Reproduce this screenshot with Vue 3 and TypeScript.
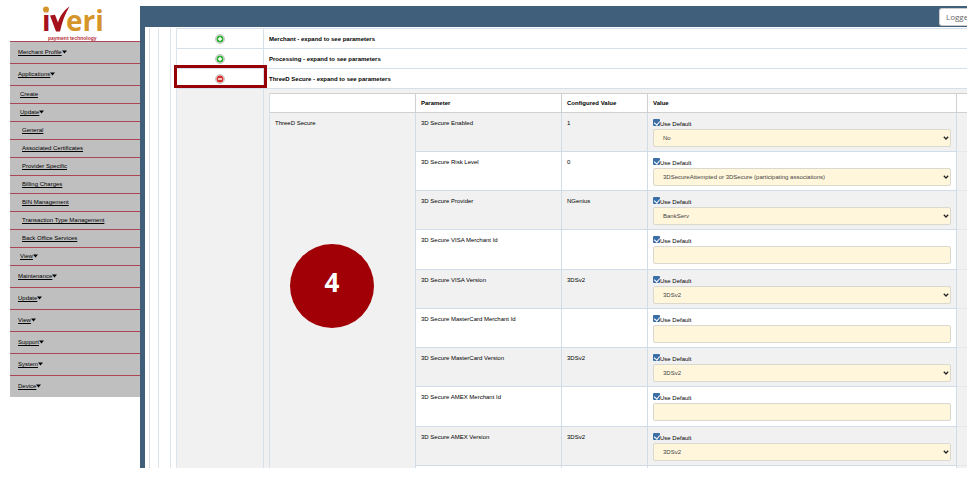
<script setup lang="ts">
interface MenuItem {
  label: string
  level: 0 | 1 | 2
  arrow?: boolean
}

interface Parameter {
  id: string
  name: string
  configured: string
  options?: string[]
}

const menu: MenuItem[] = [
  { label: 'Merchant Profile', level: 0, arrow: true },
  { label: 'Applications', level: 0, arrow: true },
  { label: 'Create', level: 1 },
  { label: 'Update', level: 1, arrow: true },
  { label: 'General', level: 2 },
  { label: 'Associated Certificates', level: 2 },
  { label: 'Provider Specific', level: 2 },
  { label: 'Billing Charges', level: 2 },
  { label: 'BIN Management', level: 2 },
  { label: 'Transaction Type Management', level: 2 },
  { label: 'Back Office Services', level: 2 },
  { label: 'View', level: 1, arrow: true },
  { label: 'Maintenance', level: 0, arrow: true },
  { label: 'Update', level: 0, arrow: true },
  { label: 'View', level: 0, arrow: true },
  { label: 'Support', level: 0, arrow: true },
  { label: 'System', level: 0, arrow: true },
  { label: 'Device', level: 0, arrow: true },
]

const groups = [
  { name: 'Merchant', open: false },
  { name: 'Processing', open: false },
  { name: 'ThreeD Secure', open: true },
]

const parameters: Parameter[] = [
  { id: 'enabled', name: '3D Secure Enabled', configured: '1', options: ['No'] },
  { id: 'risk', name: '3D Secure Risk Level', configured: '0', options: ['3DSecureAttempted or 3DSecure (participating associations)'] },
  { id: 'provider', name: '3D Secure Provider', configured: 'NGenius', options: ['BankServ'] },
  { id: 'visa-id', name: '3D Secure VISA Merchant Id', configured: '' },
  { id: 'visa-version', name: '3D Secure VISA Version', configured: '3DSv2', options: ['3DSv2'] },
  { id: 'mc-id', name: '3D Secure MasterCard Merchant Id', configured: '' },
  { id: 'mc-version', name: '3D Secure MasterCard Version', configured: '3DSv2', options: ['3DSv2'] },
  { id: 'amex-id', name: '3D Secure AMEX Merchant Id', configured: '' },
  { id: 'amex-version', name: '3D Secure AMEX Version', configured: '3DSv2', options: ['3DSv2'] },
]
</script>

<template>
  <div class="page">
    <aside class="sidebar">
      <svg class="logo" viewBox="0 0 130 35" role="img" aria-label="iveri payment technology">
        <text x="32" y="25" class="mark red">i</text>
        <circle cx="36" cy="3.5" r="3.6" fill="#fff" />
        <circle cx="36" cy="3.5" r="3" fill="#d6952a" />
        <path d="M40 9.500 L45 8.800 L48 16.500 C50 10 54 4 59.500 .5 C55 8 52 16 50 25.500 L46 25.500 Z" fill="#a5121c" />
        <text x="56" y="25" class="mark gold">eri</text>
        <text x="38" y="34" class="tagline">payment technology</text>
      </svg>
      <nav class="menu">
        <div v-for="(item, i) in menu" :key="i" class="item" :class="'level-' + item.level">
          <a href="#">{{ item.label }}</a>
          <svg v-if="item.arrow" class="caret" viewBox="0 0 6 4"><path d="M0 .2H6L3 3.800Z" /></svg>
        </div>
      </nav>
    </aside>

    <main class="main">
      <header class="topbar"><button type="button" class="logged">Logge</button></header>
      <div class="body">
        <div class="rail outer"></div>
        <div class="rail middle"></div>
        <div class="rail inner"></div>
        <div class="rail gap"></div>
        <table class="groups">
          <colgroup><col class="toggle-col" /><col /></colgroup>
          <tbody>
            <tr v-for="g in groups" :key="g.name" class="group">
              <td class="toggle-cell">
                <button type="button" class="toggle" :aria-label="g.name">
                  <svg viewBox="0 0 10 10">
                    <circle cx="5" cy="5" r="4.500" fill="#f4f4f4" stroke="#c4c4c4" />
                    <circle cx="5" cy="5" r="3.500" :fill="g.open ? '#d62f2c' : '#2fae35'" />
                    <path :d="g.open ? 'M3 5H7' : 'M3 5H7M5 3V7'" stroke="#fff" stroke-width="1.400" />
                  </svg>
                </button>
                <span v-if="g.open" class="highlight"></span>
              </td>
              <th scope="row">{{ g.name }} - expand to see parameters</th>
            </tr>
            <tr class="detail">
              <td class="empty"></td>
              <td class="nest">
                <table class="params">
                  <colgroup>
                    <col class="c-group" /><col class="c-name" /><col class="c-conf" /><col /><col class="c-last" />
                  </colgroup>
                  <thead>
                    <tr><th></th><th>Parameter</th><th>Configured Value</th><th>Value</th><th></th></tr>
                  </thead>
                  <tbody>
                    <tr v-for="(p, i) in parameters" :key="p.id" class="param">
                      <td v-if="i === 0" class="group-name" :rowspan="parameters.length + 1">
                        ThreeD Secure
                        <span class="step">4</span>
                      </td>
                      <td>{{ p.name }}</td>
                      <td>{{ p.configured }}</td>
                      <td class="value">
                        <label class="default"><input type="checkbox" checked /><span>Use Default</span></label>
                        <div v-if="p.options" class="field">
                          <select :aria-label="p.name">
                            <option v-for="o in p.options" :key="o">{{ o }}</option>
                          </select>
                          <svg class="chevron" viewBox="0 0 6 4"><path d="M.8 .8L3 3L5.200 .8" /></svg>
                        </div>
                        <div v-else class="field"><input type="text" :aria-label="p.name" /></div>
                      </td>
                      <td class="tail"></td>
                    </tr>
                    <tr class="more"><td></td><td></td><td></td><td class="tail"></td></tr>
                  </tbody>
                </table>
              </td>
            </tr>
          </tbody>
        </table>
      </div>
    </main>
  </div>
</template>

<style>
body {
  background: #fff;
}
</style>

<style scoped>
.page {
  display: flex;
  align-items: flex-start;
  padding: 6px 8px 30px 10px;
  font-family: "Liberation Sans", Arial, sans-serif;
  font-size: 6px;
  line-height: 8px;
  color: #000;
}
.page * {
  box-sizing: border-box;
}
.sidebar {
  flex: 0 0 130px;
}
.logo {
  display: block;
  width: 130px;
  height: 35px;
  overflow: visible;
}
.mark {
  font-family: "Open Sans", sans-serif;
  font-weight: 700;
  font-size: 28px;
}
.red {
  fill: #a5121c;
}
.gold {
  fill: #d6952a;
}
.tagline {
  font-size: 5px;
  font-weight: 700;
  fill: #b5303a;
}
.menu {
  background: #bfbfbf;
}
.item {
  display: flex;
  align-items: center;
  height: 18px;
  padding-bottom: 1px;
  border-top: 1px solid #ab4656;
}
.item a {
  color: #000;
  text-decoration: underline;
}
.level-0 {
  height: 22px;
  padding-left: 8px;
}
.level-1 {
  padding-left: 10px;
}
.level-2 {
  padding-left: 12px;
}
.caret {
  width: 5px;
  height: 4px;
}
.main {
  flex: 1;
  min-width: 0;
  overflow: hidden;
  border-left: 5px solid #3f5f7b;
}
.topbar {
  display: flex;
  justify-content: flex-end;
  height: 21px;
  padding: 2px 0 1px;
  background: #3f5f7b;
}
.logged {
  width: 28px;
  padding: 0 0 0 6px;
  border: 1px solid #ccc;
  border-right: 0;
  border-radius: 3px 0 0 3px;
  background: #fff;
  color: #666;
  font-family: "Open Sans", sans-serif;
  font-size: 8px;
  line-height: 14px;
  text-align: left;
  overflow: hidden;
}
.body {
  display: flex;
  padding-top: 1px;
  background: #fff;
}
.rail {
  flex: none;
  border-right: 1px solid #dce5ee;
}
.outer {
  width: 5px;
  border-color: #ddd;
}
.middle {
  width: 9px;
}
.inner {
  width: 12px;
}
.gap {
  width: 6px;
}
table {
  width: 100%;
  border-collapse: separate;
  border-spacing: 0;
  table-layout: fixed;
}
th,
td {
  padding: 0;
  text-align: left;
  vertical-align: top;
}
.groups {
  flex: 1;
  min-width: 0;
}
.toggle-col {
  width: 87px;
}
.group td,
.group th {
  height: 20px;
  border-top: 1px solid #d5e0eb;
  vertical-align: middle;
}
.group th {
  padding-left: 5px;
}
.toggle-cell {
  position: relative;
  border-right: 1px solid #d5e0eb;
}
.toggle {
  display: block;
  width: 10px;
  height: 10px;
  margin: 0 auto;
  padding: 0;
  border: 0;
  background: none;
}
.toggle svg {
  display: block;
}
.highlight {
  position: absolute;
  inset: -4px -4px 0 -3px;
  border: 3px solid #960007;
}
.detail > td {
  border-top: 1px solid #d5e0eb;
  background: #f1f1f1;
}
.detail > .empty {
  border-right: 1px solid #d5e0eb;
}
.detail > .nest {
  padding: 4px 0 0 5px;
}
.params {
  border-left: 1px solid #d5e0eb;
}
.c-group {
  width: 146px;
}
.c-name {
  width: 146px;
}
.c-conf {
  width: 86px;
}
.c-last {
  width: 10px;
}
.params th {
  height: 20px;
  padding-left: 5px;
  border-top: 1px solid #d0d0d0;
  border-right: 1px solid #d0d0d0;
  border-bottom: 1px solid #d0d0d0;
  background: #fff;
  vertical-align: middle;
}
.params th:last-child {
  border-right: 0;
}
.params td {
  padding: 6px 5px 0;
  border-right: 1px solid #d0dde9;
  border-bottom: 1px solid #d0dde9;
  background: #f1f1f1;
}
.param {
  height: 39px;
}
.param:nth-child(4n) {
  height: 40px;
}
.params tr:nth-child(even) td {
  background: #fff;
}
.params .group-name {
  position: relative;
  border-bottom: 0;
}
.params tr .tail,
.params tr:nth-child(even) .tail {
  border-right: 0;
  border-color: #e4e8ec;
  background: #f1f1f1;
}
.params .more td {
  height: 2px;
  padding: 0;
  border-bottom: 0;
}
.step {
  position: absolute;
  top: 131px;
  left: 20px;
  width: 84px;
  height: 84px;
  border-radius: 50%;
  background: #a00006;
  color: #fff;
  font: 700 26px/76px "Open Sans", sans-serif;
  text-align: center;
}
.default {
  display: flex;
  align-items: center;
  height: 10px;
}
.default input {
  position: relative;
  align-self: flex-start;
  appearance: none;
  width: 7px;
  height: 7px;
  margin: 0;
  border-radius: 1px;
  background: #3a6ea5;
}
.default input:checked::after {
  content: "";
  position: absolute;
  top: 1px;
  left: 2px;
  width: 3px;
  height: 4px;
  border: solid #fff;
  border-width: 0 1px 1px 0;
  transform: rotate(40deg);
}
.field {
  position: relative;
}
.field select,
.field input {
  appearance: none;
  display: block;
  width: 100%;
  height: 18px;
  padding: 0 9px;
  border: 1px solid #d9d9cf;
  border-radius: 2px;
  background: #fff6dc;
  color: #444;
  font: inherit;
}
.chevron {
  position: absolute;
  top: 7px;
  right: 2px;
  width: 6px;
  height: 4px;
  fill: none;
  stroke: #222;
  stroke-width: 1.3;
  pointer-events: none;
}
</style>
